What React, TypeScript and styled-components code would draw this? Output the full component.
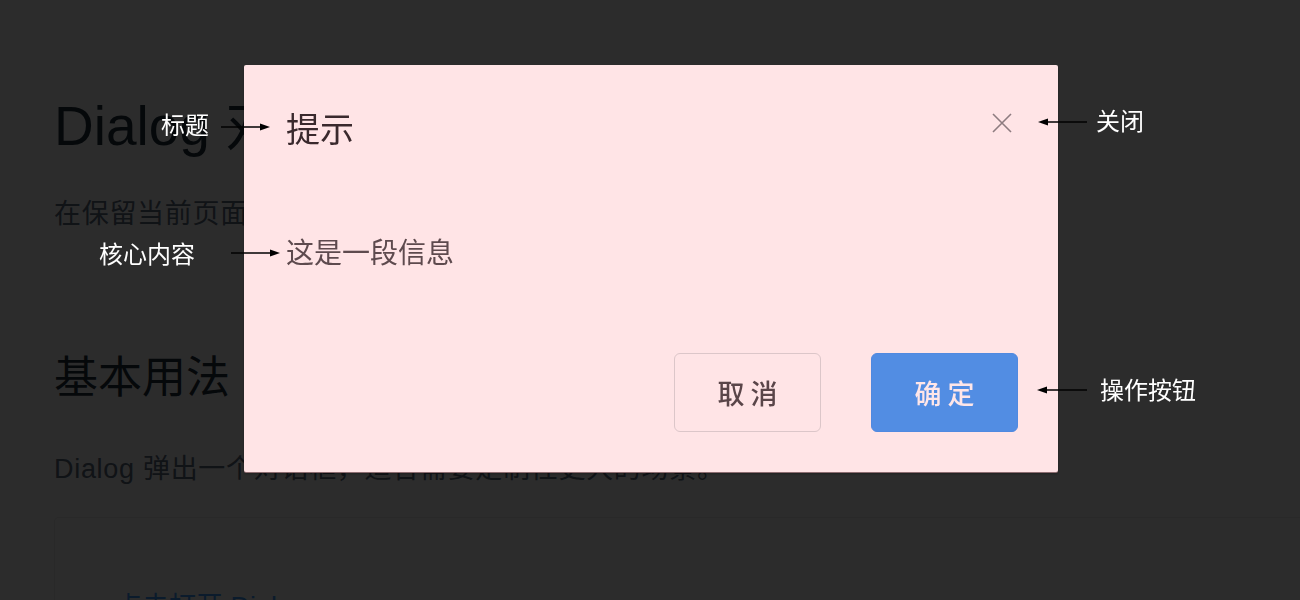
import React from "react";
import styled, { createGlobalStyle } from "styled-components";

const GlobalStyle = createGlobalStyle`
  html, body {
    margin: 0;
    padding: 0;
    overflow: hidden;
    background: #fff;
  }
  body {
    font-family: "Liberation Sans", "Noto Sans CJK SC", sans-serif;
  }
`;

const Page = styled.main`
  width: 1300px;
  height: 600px;
  box-sizing: border-box;
  padding: 93px 0 0 54px;
  background: #fff;
  overflow: hidden;
`;

const PageTitle = styled.h2`
  margin: 0;
  font-size: 55px;
  line-height: 66px;
  font-weight: 400;
  color: #1f2f3d;
  white-space: nowrap;
`;

const Paragraph = styled.p<{ $gap: number }>`
  margin: ${(p) => p.$gap}px 0 0;
  font-size: 27px;
  line-height: 40px;
  letter-spacing: 0.7px;
  color: #5e6d82;
  white-space: nowrap;
`;

const SectionTitle = styled.h3`
  margin: 117px 0 0;
  font-size: 44px;
  line-height: 53px;
  font-weight: 400;
  color: #1f2f3d;
`;

const DemoBlock = styled.section`
  margin-top: 28px;
  width: 1400px;
  height: 220px;
  box-sizing: border-box;
  border: 1px solid #ebebeb;
  border-radius: 4px;
  padding: 69px 0 0 60px;
`;

const DemoLink = styled.span`
  font-size: 27px;
  line-height: 40px;
  color: #409eff;
`;

const Mask = styled.div`
  position: fixed;
  inset: 0;
  background: rgba(0, 0, 0, 0.827);
  display: flex;
  justify-content: center;
  align-items: flex-start;
  padding: 65px 0 0 2px;
  box-sizing: border-box;
`;

const Dialog = styled.div`
  width: 814px;
  height: 407px;
  box-sizing: border-box;
  background: #ffe4e6;
  border-radius: 2px;
  box-shadow: 0 1px 0 #8c6c70, 0 2px 3px rgba(0, 0, 0, 0.3);
  display: flex;
  flex-direction: column;
  font-family: "Noto Sans CJK SC", sans-serif;
`;

const Header = styled.header`
  display: flex;
  justify-content: space-between;
  align-items: flex-start;
  padding: 44px 46px 0 42px;
`;

const DialogTitle = styled.span`
  font-size: 34px;
  line-height: 38px;
  color: #3a292d;
`;

const CloseButton = styled.button`
  margin-top: 4px;
  width: 20px;
  height: 20px;
  padding: 0;
  border: 0;
  background: none;
  color: #8e7c80;
  display: flex;
  cursor: pointer;
`;

const Body = styled.div`
  padding: 85px 42px 0;
  font-size: 28px;
  line-height: 38px;
  color: #5e4a4e;
`;

const Footer = styled.footer`
  margin-top: auto;
  display: flex;
  justify-content: flex-end;
  gap: 50px;
  padding: 0 40px 40px;
`;

const Button = styled.button<{ $primary?: boolean }>`
  width: 147px;
  height: 79px;
  box-sizing: border-box;
  padding: 0;
  border-radius: 6px;
  border: 1px solid ${(p) => (p.$primary ? "#5089e0" : "#dcc6c9")};
  background: ${(p) => (p.$primary ? "#528de3" : "transparent")};
  color: ${(p) => (p.$primary ? "#ffe6e8" : "#5a4549")};
  font-family: "Noto Sans CJK SC", sans-serif;
  font-size: 27px;
  font-weight: 500;
  cursor: pointer;
`;

const Note = styled.span<{ $x: number; $y: number }>`
  position: absolute;
  left: ${(p) => p.$x}px;
  top: ${(p) => p.$y}px;
  color: #fff;
  font-family: "Noto Sans CJK SC", sans-serif;
  font-size: 24px;
  line-height: 24px;
  white-space: nowrap;
`;

const ArrowSvg = styled.svg<{ $x: number; $y: number }>`
  position: absolute;
  left: ${(p) => p.$x}px;
  top: ${(p) => p.$y - 5}px;
  overflow: visible;
`;

function Arrow({ x, y, w, left }: { x: number; y: number; w: number; left?: boolean }) {
  return (
    <ArrowSvg $x={x} $y={y} width={w} height={10} viewBox={`0 0 ${w} 10`}>
      {left ? (
        <>
          <line x1={8} y1={5} x2={w} y2={5} stroke="#000" strokeWidth={1.6} />
          <polygon points={`0,5 10,1.5 10,8.5`} fill="#000" />
        </>
      ) : (
        <>
          <line x1={0} y1={5} x2={w - 8} y2={5} stroke="#000" strokeWidth={1.6} />
          <polygon points={`${w},5 ${w - 10},1.5 ${w - 10},8.5`} fill="#000" />
        </>
      )}
    </ArrowSvg>
  );
}

export default function App() {
  return (
    <>
      <GlobalStyle />
      <Page>
        <PageTitle>Dialog 对话框</PageTitle>
        <Paragraph $gap={35}>在保留当前页面状态的情况下，告知用户并承载相关操作。</Paragraph>
        <SectionTitle>基本用法</SectionTitle>
        <Paragraph $gap={45}>Dialog 弹出一个对话框，适合需要定制性更大的场景。</Paragraph>
        <DemoBlock>
          <DemoLink>点击打开 Dialog</DemoLink>
        </DemoBlock>
      </Page>
      <Mask>
        <Dialog role="dialog">
          <Header>
            <DialogTitle>提示</DialogTitle>
            <CloseButton aria-label="关闭">
              <svg width="20" height="20" viewBox="0 0 20 20">
                <path d="M1 1 L19 19 M19 1 L1 19" stroke="currentColor" strokeWidth="1.6" fill="none" />
              </svg>
            </CloseButton>
          </Header>
          <Body>这是一段信息</Body>
          <Footer>
            <Button>取 消</Button>
            <Button $primary>确 定</Button>
          </Footer>
        </Dialog>
        <Note $x={161} $y={112}>标题</Note>
        <Arrow x={221} y={127} w={49} />
        <Note $x={99} $y={241}>核心内容</Note>
        <Arrow x={231} y={253} w={49} />
        <Note $x={1096} $y={108}>关闭</Note>
        <Arrow x={1038} y={122} w={49} left />
        <Note $x={1100} $y={377}>操作按钮</Note>
        <Arrow x={1037} y={390} w={50} left />
      </Mask>
    </>
  );
}
